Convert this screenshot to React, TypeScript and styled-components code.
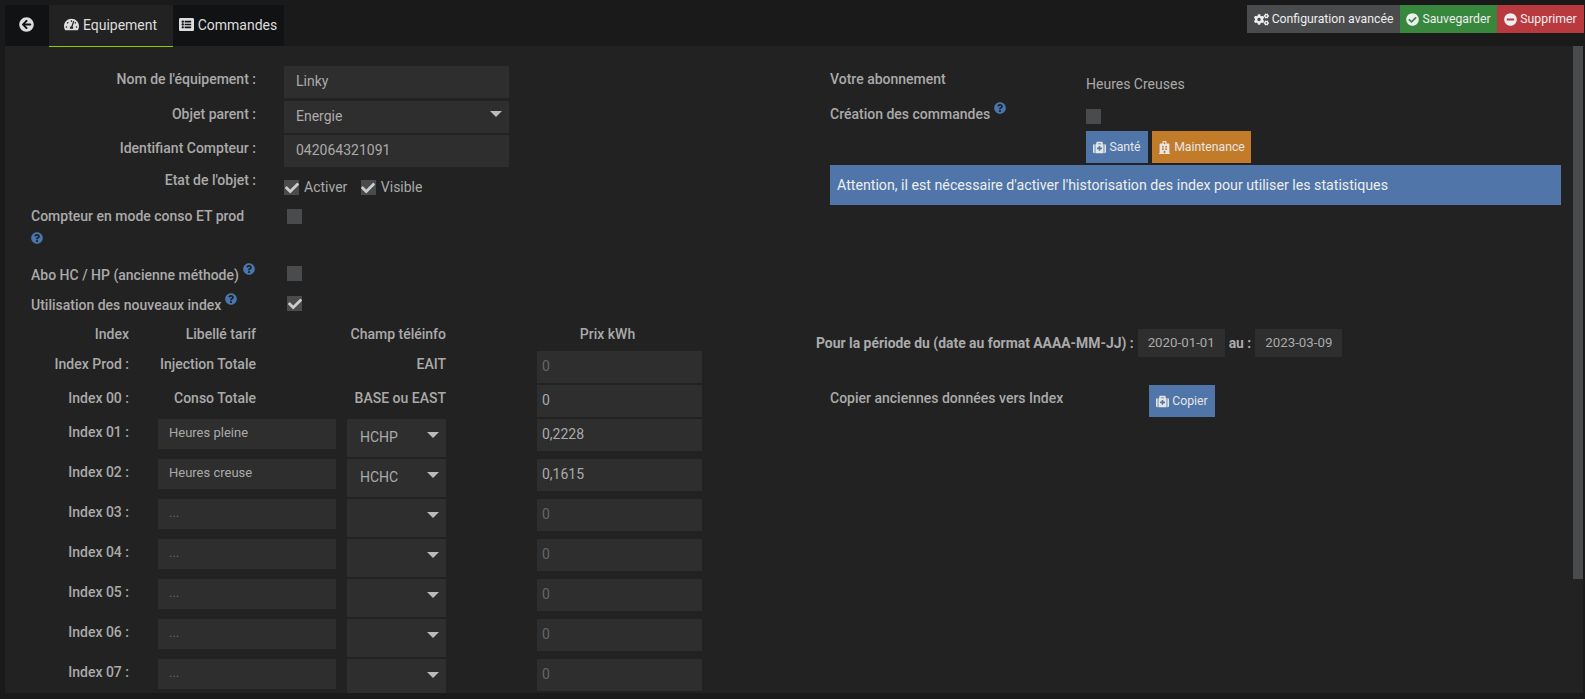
import React from "react";
import styled, { createGlobalStyle } from "styled-components";
import {
  FaArrowCircleLeft,
  FaTachometerAlt,
  FaListAlt,
  FaCogs,
  FaCheckCircle,
  FaMinusCircle,
  FaMedkit,
  FaHospital,
  FaQuestionCircle,
  FaCheck,
} from "react-icons/fa";

const Global = createGlobalStyle`
  html, body { margin: 0; padding: 0; height: 100%; background: #1a1a1a; overflow: hidden; }
  body { font-family: Roboto, "Liberation Sans", sans-serif; font-size: 14px; color: #aaa; }
  * { box-sizing: border-box; }
`;

const Page = styled.div`
  height: 699px;
  display: flex;
  flex-direction: column;
  background: #1a1a1a;
`;

const TopBar = styled.div`
  height: 46px;
  flex: none;
  display: flex;
  justify-content: space-between;
  align-items: flex-start;
  padding: 5px 1px 0 5px;
`;

const Tabs = styled.div`
  display: flex;
  height: 41px;
  background: #111214;
`;

const Tab = styled.div<{ $active?: boolean; $w: number }>`
  width: ${(p) => p.$w}px;
  height: ${(p) => (p.$active ? 42 : 41)}px;
  display: flex;
  align-items: center;
  justify-content: center;
  gap: 4px;
  padding: 0 1px 2px 0;
  font-size: 14px;
  color: #ddd;
  background: ${(p) => (p.$active ? "#222" : "transparent")};
  border-bottom: ${(p) => (p.$active ? "1px solid #93ca02" : "none")};
  position: relative;
  z-index: 1;
  svg { font-size: 15px; color: #ddd; }
`;

const Actions = styled.div`
  display: flex;
`;

const ActionButton = styled.div<{ $bg: string; $w: number }>`
  height: 28px;
  width: ${(p) => p.$w}px;
  background: ${(p) => p.$bg};
  color: #eee;
  font-size: 12.25px;
  font-weight: 400;
  display: flex;
  align-items: center;
  justify-content: center;
  gap: 3px;
  svg { font-size: ${(p) => (p.$w > 120 ? 15 : 13)}px; }
`;

const Panel = styled.div`
  flex: 1;
  margin: 0 2px 6px 5px;
  background: #222;
  position: relative;
  display: flex;
  overflow: hidden;
`;

const Scrollbar = styled.div`
  position: absolute;
  top: 0;
  right: 0;
  width: 10px;
  height: 533px;
  background: #4a4b4d;
`;

const LeftColumn = styled.div`
  width: 811px;
  flex: none;
  padding-top: 20px;
`;

const RightColumn = styled.div`
  flex: 1;
  padding: 23px 0 0 0;
`;

const Row = styled.div<{ $mt?: number }>`
  display: grid;
  grid-template-columns: 251px 225px;
  column-gap: 28px;
  margin-top: ${(p) => p.$mt ?? 0}px;
`;

const RowLabel = styled.div`
  text-align: right;
  font-weight: 500;
  line-height: 20px;
  padding-top: 3px;
`;

const Field = styled.input<{ $muted?: boolean }>`
  display: block;
  width: 100%;
  height: 32px;
  border: 0;
  outline: 0;
  margin: 0;
  padding: 0 12px 3px;
  background: #2e2e2e;
  color: ${(p) => (p.$muted ? "#666" : "#aaa")};
  font-family: inherit;
  font-size: 14px;
  &::placeholder { color: #666; opacity: 1; }
`;

const Select = styled.div<{ $h?: number; $pad?: number }>`
  height: ${(p) => p.$h ?? 32}px;
  background: #2e2e2e;
  display: flex;
  align-items: center;
  justify-content: space-between;
  padding: 0 7px 3px ${(p) => p.$pad ?? 12}px;
  color: #aaa;
  font-size: 14px;
`;

const Arrow = styled.span`
  width: 0;
  height: 0;
  margin-top: -4px;
  border-left: 6px solid transparent;
  border-right: 6px solid transparent;
  border-top: 6px solid #bbb;
`;

const CheckRow = styled.div`
  display: flex;
  align-items: center;
  padding-top: 13px;
`;

const Box = styled.span`
  width: 15px;
  height: 15px;
  flex: none;
  background: #4a4b4d;
  display: inline-flex;
  align-items: center;
  justify-content: center;
  svg { font-size: 14px; color: #ccc; }
`;

const CheckText = styled.span`
  margin-left: 5px;
  margin-right: 13.5px;
  line-height: 15px;
`;

const SwitchRow = styled.div<{ $mt: number; $h?: number }>`
  display: grid;
  grid-template-columns: 256px 15px;
  padding-left: 26px;
  margin-top: ${(p) => p.$mt}px;
  height: ${(p) => p.$h ?? 20}px;
`;

const SwitchLabel = styled.div`
  font-weight: 500;
  line-height: 20px;
  width: 230px;
`;

const BoxSlot = styled.div`
  padding-top: 3px;
`;

const Help = styled(FaQuestionCircle)`
  color: #4a76b0;
  font-size: 12px;
  margin-left: 4px;
  vertical-align: 5px;
`;

const BlockHelp = styled(FaQuestionCircle)`
  display: block;
  color: #4a76b0;
  font-size: 12px;
  margin-top: 6px;
`;

const Grid = styled.div`
  margin-top: 9px;
`;

const TableRow = styled.div<{ $h: number }>`
  display: grid;
  grid-template-columns: 124px 207px 110px 256px;
  height: ${(p) => p.$h}px;
  & > :nth-child(2) { margin-left: 29px; width: 178px; }
  & > :nth-child(3) { margin-left: 11px; width: 99px; }
  & > :nth-child(4) { margin-left: 91px; width: 165px; }
`;

const Cell = styled.div<{ $align?: string; $pr?: number; $top?: number }>`
  text-align: ${(p) => p.$align ?? "right"};
  padding-right: ${(p) => p.$pr ?? 0}px;
  padding-top: ${(p) => p.$top ?? 3}px;
  line-height: 20px;
  font-weight: 500;
`;

const SmallField = styled(Field)`
  height: 30px;
  font-size: 13px;
  padding: 0 11px 3px;
`;

const PriceField = styled(Field)`
  padding: 0 5px 3px;
`;

const AboutRow = styled.div<{ $mt?: number }>`
  display: grid;
  grid-template-columns: 256px 1fr;
  padding-left: 14px;
  margin-top: ${(p) => p.$mt ?? 0}px;
`;

const AboutLabel = styled.div`
  font-weight: 500;
  line-height: 20px;
`;

const AboutValue = styled.div<{ $top: number }>`
  line-height: 20px;
  padding-top: ${(p) => p.$top}px;
`;

const ButtonRow = styled.div`
  display: flex;
  gap: 4px;
  padding-left: 270px;
  margin-top: 2px;
`;

const Button = styled.div<{ $bg: string; $w: number }>`
  height: 32px;
  width: ${(p) => p.$w}px;
  background: ${(p) => p.$bg};
  color: #e6e6e6;
  font-size: 12.25px;
  font-weight: 400;
  display: flex;
  align-items: center;
  justify-content: center;
  gap: 3px;
  svg { font-size: 13px; }
`;

const Alert = styled.div`
  margin: 2px 22px 0 14px;
  height: 40px;
  background: #4f75a9;
  color: #eee;
  font-size: 14.2px;
  display: flex;
  align-items: center;
  padding-left: 7px;
`;

const PeriodRow = styled.div`
  display: flex;
  align-items: center;
  margin-top: 124px;
  height: 28px;
`;

const PeriodLabel = styled.span`
  font-weight: 700;
  font-size: 13.9px;
  white-space: nowrap;
`;

const DateField = styled(Field)<{ $w: number }>`
  width: ${(p) => p.$w}px;
  height: 28px;
  padding: 0 10px 1px;
  font-size: 13.3px;
  margin: 0 4px;
`;

const CopyRow = styled.div`
  display: flex;
  align-items: flex-start;
  padding-left: 14px;
  margin-top: 28px;
`;

const CopyLabel = styled.div`
  width: 319px;
  font-weight: 500;
  line-height: 20px;
  padding-top: 3px;
`;

type Idx = { n: string; label?: string; sel?: string };
const rows: Idx[] = [
  { n: "Index 01 :", label: "Heures pleine", sel: "HCHP" },
  { n: "Index 02 :", label: "Heures creuse", sel: "HCHC" },
  { n: "Index 03 :" },
  { n: "Index 04 :" },
  { n: "Index 05 :" },
  { n: "Index 06 :" },
  { n: "Index 07 :" },
];
const prices = ["0,2228", "0,1615", "0", "0", "0", "0", "0"];

export default function App() {
  return (
    <>
      <Global />
      <Page>
        <TopBar>
          <Tabs>
            <Tab $w={44}><FaArrowCircleLeft /></Tab>
            <Tab $w={124} $active><FaTachometerAlt />Equipement</Tab>
            <Tab $w={111}><FaListAlt />Commandes</Tab>
          </Tabs>
          <Actions>
            <ActionButton $bg="#4a4b4d" $w={153}><FaCogs />Configuration avancée</ActionButton>
            <ActionButton $bg="#37873d" $w={97}><FaCheckCircle />Sauvegarder</ActionButton>
            <ActionButton $bg="#b93a3e" $w={87}><FaMinusCircle />Supprimer</ActionButton>
          </Actions>
        </TopBar>
        <Panel>
          <LeftColumn>
            <Row>
              <RowLabel>Nom de l'équipement :</RowLabel>
              <Field readOnly value="Linky" />
            </Row>
            <Row $mt={3}>
              <RowLabel>Objet parent :</RowLabel>
              <Select>Energie<Arrow /></Select>
            </Row>
            <Row $mt={2}>
              <RowLabel>Identifiant Compteur :</RowLabel>
              <Field readOnly value="042064321091" />
            </Row>
            <Row>
              <RowLabel>Etat de l'objet :</RowLabel>
              <CheckRow>
                <Box><FaCheck /></Box>
                <CheckText>Activer</CheckText>
                <Box><FaCheck /></Box>
                <CheckText>Visible</CheckText>
              </CheckRow>
            </Row>
            <SwitchRow $mt={11} $h={44}>
              <SwitchLabel>
                Compteur en mode conso ET prod
                <BlockHelp />
              </SwitchLabel>
              <BoxSlot><Box /></BoxSlot>
            </SwitchRow>
            <SwitchRow $mt={13}>
              <SwitchLabel>Abo HC / HP (ancienne méthode)<Help /></SwitchLabel>
              <BoxSlot><Box /></BoxSlot>
            </SwitchRow>
            <SwitchRow $mt={10}>
              <SwitchLabel>Utilisation des nouveaux index<Help /></SwitchLabel>
              <BoxSlot><Box><FaCheck /></Box></BoxSlot>
            </SwitchRow>
            <Grid>
              <TableRow $h={29}>
                <Cell $top={2}>Index</Cell>
                <Cell $pr={80} $top={2}>Libellé tarif</Cell>
                <Cell $top={2}>Champ téléinfo</Cell>
                <Cell $align="center" $pr={24} $top={2}>Prix kWh</Cell>
              </TableRow>
              <TableRow $h={34}>
                <Cell>Index Prod :</Cell>
                <Cell $pr={80}>Injection Totale</Cell>
                <Cell>EAIT</Cell>
                <PriceField $muted readOnly value="0" />
              </TableRow>
              <TableRow $h={34}>
                <Cell>Index 00 :</Cell>
                <Cell $pr={80}>Conso Totale</Cell>
                <Cell>BASE ou EAST</Cell>
                <PriceField readOnly value="0" />
              </TableRow>
              {rows.map((r, i) => (
                <TableRow $h={40} key={r.n}>
                  <Cell>{r.n}</Cell>
                  <SmallField readOnly value={r.label ?? ""} placeholder="..." />
                  <Select $h={38} $pad={13}>{r.sel ?? <span />}<Arrow /></Select>
                  <PriceField $muted={!r.sel} readOnly value={prices[i]} />
                </TableRow>
              ))}
            </Grid>
          </LeftColumn>
          <RightColumn>
            <AboutRow>
              <AboutLabel>Votre abonnement</AboutLabel>
              <AboutValue $top={5}>Heures Creuses</AboutValue>
            </AboutRow>
            <AboutRow $mt={8}>
              <AboutLabel>Création des commandes<Help /></AboutLabel>
              <AboutValue $top={7}><Box /></AboutValue>
            </AboutRow>
            <ButtonRow>
              <Button $bg="#4f75a9" $w={62}><FaMedkit />Santé</Button>
              <Button $bg="#c27b28" $w={99}><FaHospital />Maintenance</Button>
            </ButtonRow>
            <Alert>Attention, il est nécessaire d'activer l'historisation des index pour utiliser les statistiques</Alert>
            <PeriodRow>
              <PeriodLabel>Pour la période du (date au format AAAA-MM-JJ) :</PeriodLabel>
              <DateField $w={87} readOnly value="2020-01-01" />
              <PeriodLabel>au :</PeriodLabel>
              <DateField $w={87} readOnly value="2023-03-09" />
            </PeriodRow>
            <CopyRow>
              <CopyLabel>Copier anciennes données vers Index</CopyLabel>
              <Button $bg="#4f75a9" $w={66}><FaMedkit />Copier</Button>
            </CopyRow>
          </RightColumn>
          <Scrollbar />
        </Panel>
      </Page>
    </>
  );
}
